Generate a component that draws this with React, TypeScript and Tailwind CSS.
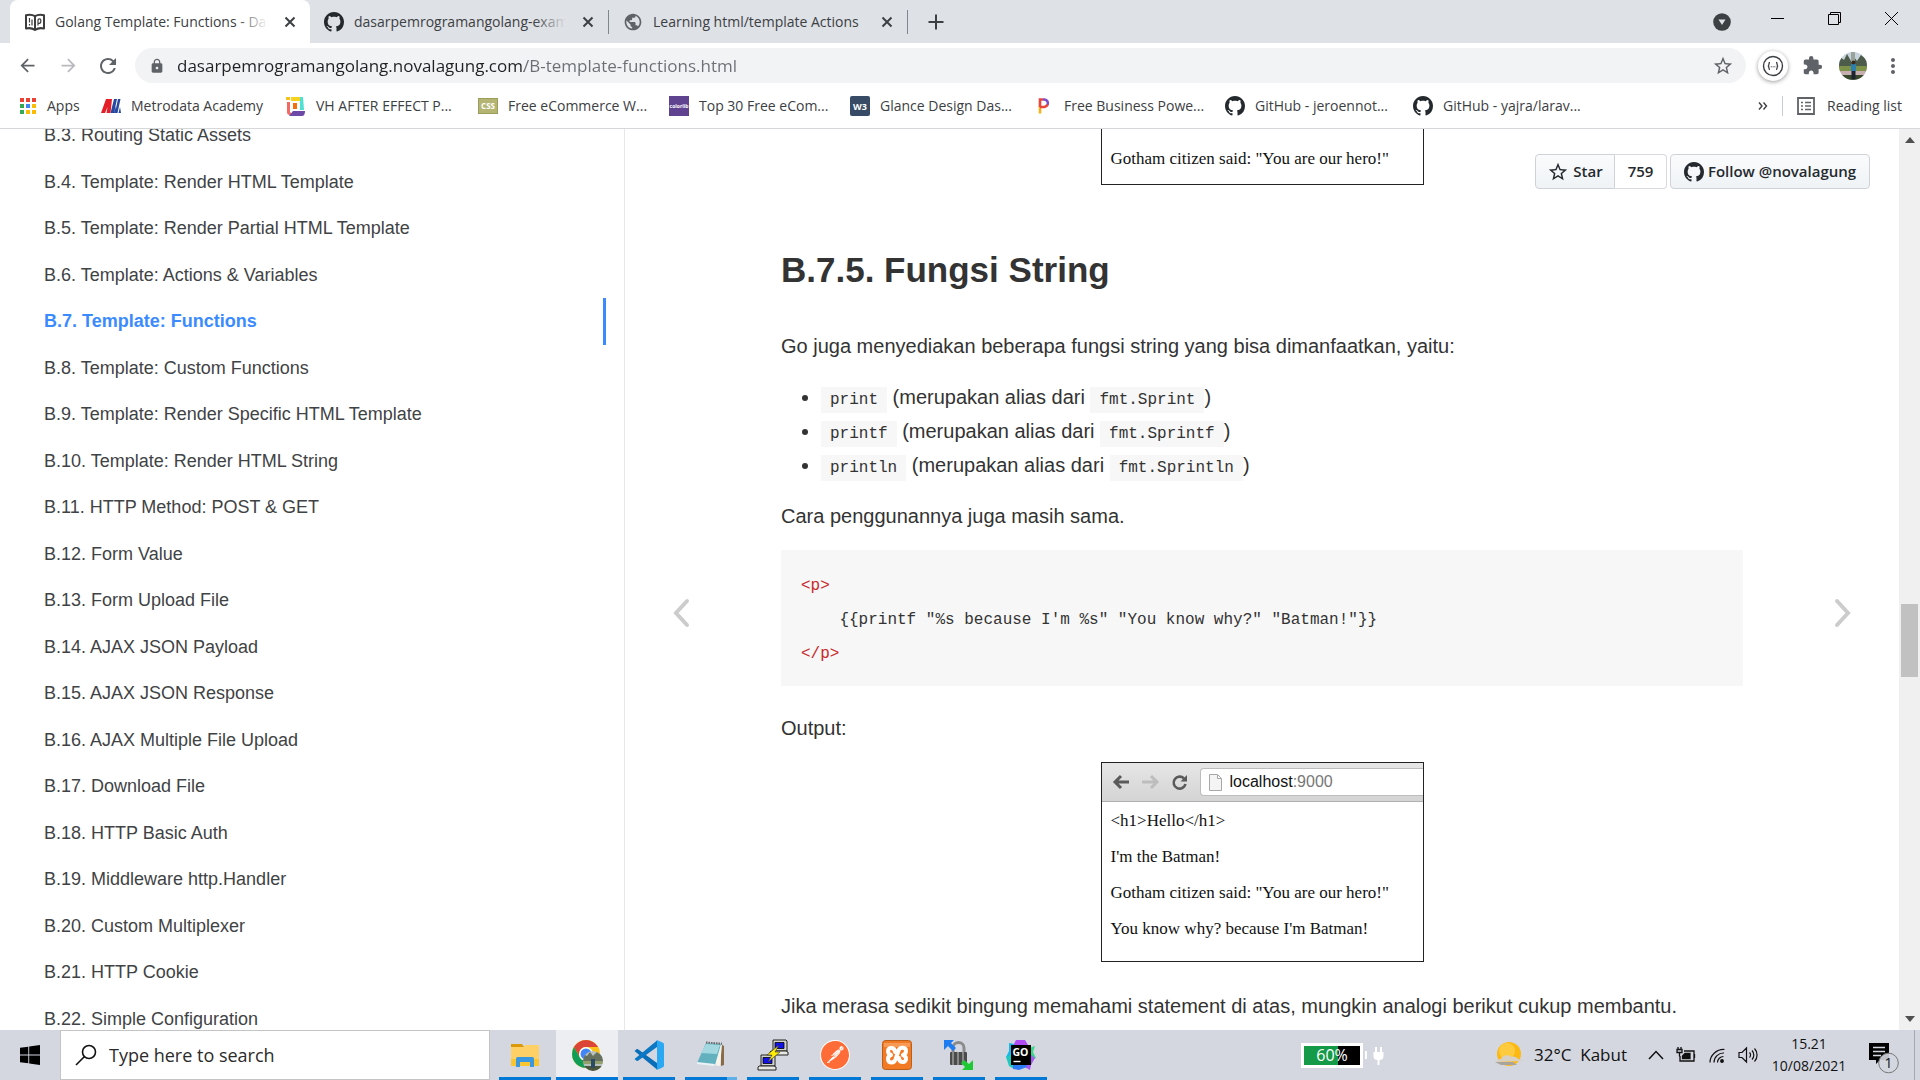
import React from "react";
import { SiPostman } from "react-icons/si";
import { MdExtension, MdLock, MdPublic, MdRefresh, MdStarBorder, MdArrowBack, MdArrowForward, MdMoreVert } from "react-icons/md";

const UI = "font-['Open_Sans',sans-serif]";

/* ---------- favicons and bookmark icons ---------- */

function GithubMark() {
  return (
    <svg viewBox="0 0 16 16" className="size-5 shrink-0" fill="#24292e">
      <path d="M8 0C3.58 0 0 3.58 0 8c0 3.54 2.29 6.53 5.47 7.59.4.07.55-.17.55-.38 0-.19-.01-.82-.01-1.49-2.01.37-2.53-.49-2.69-.94-.09-.23-.48-.94-.82-1.13-.28-.15-.68-.52-.01-.53.63-.01 1.08.58 1.23.82.72 1.21 1.87.87 2.33.66.07-.52.28-.87.51-1.07-1.78-.2-3.64-.89-3.64-3.95 0-.87.31-1.59.82-2.15-.08-.2-.36-1.02.08-2.12 0 0 .67-.21 2.2.82.64-.18 1.32-.27 2-.27s1.36.09 2 .27c1.53-1.04 2.2-.82 2.2-.82.44 1.1.16 1.92.08 2.12.51.56.82 1.27.82 2.15 0 3.07-1.87 3.75-3.65 3.95.29.25.54.73.54 1.48 0 1.07-.01 1.93-.01 2.2 0 .21.15.46.55.38A8.01 8.01 0 0 0 16 8c0-4.42-3.58-8-8-8z" />
    </svg>
  );
}

function BookIcon() {
  return (
    <svg viewBox="0 0 20 20" className="size-5 shrink-0" fill="none" stroke="#3c3c3c" strokeWidth="2">
      <path d="M1 3.2C4 2.4 7.5 2.6 10 4.2C12.500 2.600 16 2.400 19 3.200V16.500C16 15.800 12.500 16.200 10 18C7.500 16.200 4 15.800 1 16.500Z" strokeLinejoin="round" />
      <path d="M10 4.200V18" />
      <path d="M4.500 6v4.500M7 7.500v6M4.500 12v1.500M13 13.500V8c0-1.500 2.800-1.500 2.800 0v1.500c0 2-2.400 2-2.400 2" strokeWidth="1.200" />
    </svg>
  );
}

function AppsIcon() {
  const colors = ["#ea4335", "#ea4335", "#ea4335", "#34a853", "#4285f4", "#fbbc05", "#34a853", "#fbbc05", "#fbbc05"];
  return (
    <svg viewBox="0 0 18 18" className="size-[18px] shrink-0">
      {colors.map((c, i) => (
        <rect key={i} x={(i % 3) * 6 + 1} y={Math.floor(i / 3) * 6 + 1} width="4" height="4" fill={c} />
      ))}
    </svg>
  );
}

function MetrodataIcon() {
  return (
    <svg viewBox="0 0 20 20" className="size-5 shrink-0">
      <path d="M0 17L5 3H11L9.500 17H5.500L6.500 11L4 17Z" fill="#e31e26" />
      <path d="M9.500 17L13 3H16L13 17ZM14 17L17 3H19.500L16.500 17ZM17.500 17L19 11L20 17Z" fill="#27489f" />
      <path d="M13 17L14 10L16 17Z" fill="#27489f" />
    </svg>
  );
}

function VhIcon() {
  return (
    <svg viewBox="0 0 20 20" className="size-5 shrink-0">
      <path d="M0 1h4v3H0z" fill="#f4c21f" />
      <path d="M1 6h3v10l3 3H4c-2 0-3-1-3-3z" fill="#f26a63" />
      <path d="M5 1h10v4H5z" fill="#f6d21e" />
      <path d="M14 1h3l1 13h-4z" fill="#4fe0d2" />
      <path d="M3 20l4-5h12c0 3-1 5-3 5z" fill="#6d4aa8" />
      <path d="M7 7h4v6H7z" fill="#f36f10" />
    </svg>
  );
}

function TileIcon({ kind }: { kind: "css" | "colorlib" | "w3" }) {
  const text = { css: "CSS", colorlib: "colorlib", w3: "W3" }[kind];
  const look = {
    css: "h-4 border border-[#9a9d5c] bg-[#b4b573] text-[8px] text-white",
    colorlib: "h-5 bg-[#5f4390] text-[5px] text-white",
    w3: "h-5 rounded-xs bg-[#374b66] text-[9px] text-white",
  }[kind];
  return (
    <span aria-hidden="true" className={`flex w-5 shrink-0 items-center justify-center overflow-hidden leading-none font-bold ${look}`}>
      {text}
    </span>
  );
}

function PIcon() {
  return (
    <svg viewBox="0 0 20 20" className="size-5 shrink-0" fill="none" strokeWidth="2.600">
      <path d="M6 10V17.500" stroke="#f6b319" />
      <path d="M6 11V3.500H9" stroke="#e8453c" />
      <path d="M9 3.500H10.500A3.800 3.800 0 0 1 13.500 9" stroke="#7b4fc9" />
      <path d="M13.500 8.500A3.800 3.800 0 0 1 10.500 11H6" stroke="#e8453c" />
    </svg>
  );
}

/* ---------- browser chrome ---------- */

function CloseX() {
  return (
    <svg viewBox="0 0 12 12" className="size-3" stroke="#3c4043" strokeWidth="2" fill="none">
      <path d="M1.500 1.500l9 9M10.500 1.500l-9 9" />
    </svg>
  );
}

function Tab({ icon, title, active, fade }: { icon: React.ReactNode; title: string; active?: boolean; fade?: boolean }) {
  return (
    <div
      className={
        active
          ? "flex w-[300px] items-center gap-2.5 rounded-t-lg bg-white pr-3.5 pl-[15px]"
          : "flex w-[298px] items-center gap-2.5 pr-[14px] pl-3.5"
      }
    >
      {icon}
      <span className="relative min-w-0 flex-1 overflow-hidden text-sm whitespace-nowrap text-[#3c4043]">
        {title}
        {fade && (
          <span
            className={
              active
                ? "absolute inset-y-0 right-0 w-8 bg-linear-to-r from-transparent to-white"
                : "absolute inset-y-0 right-0 w-8 bg-linear-to-r from-transparent to-[#dee1e6]"
            }
          />
        )}
      </span>
      <button aria-label={`Close ${title}`} className="ml-1.5">
        <CloseX />
      </button>
    </div>
  );
}

function TabStrip() {
  return (
    <div className="flex h-[43px] bg-[#dee1e6] pl-2.5">
      <Tab active fade icon={<BookIcon />} title="Golang Template: Functions - Dasar" />
      <Tab fade icon={<GithubMark />} title="dasarpemrogramangolang-example" />
      <span className="my-auto h-6 w-px bg-[#80868b]" />
      <Tab icon={<MdPublic className="size-5 shrink-0 text-[#5f6368]" />} title="Learning html/template Actions" />
      <span className="my-auto h-6 w-px bg-[#80868b]" />
      <button aria-label="New tab" className="ml-5">
        <svg viewBox="0 0 16 16" className="size-4" stroke="#3c4043" strokeWidth="2" fill="none">
          <path d="M8 0.500v15M0.500 8h15" />
        </svg>
      </button>
      <div className="ml-auto flex">
        <button aria-label="Search tabs" className="flex w-[54px] items-center justify-center">
          <svg viewBox="0 0 18 18" className="size-[18px]">
            <circle cx="9" cy="9" r="8.800" fill="#3c4043" />
            <path d="M5.500 6.500h7L9 12z" fill="#dee1e6" />
          </svg>
        </button>
        <button aria-label="Minimize" className="flex h-[37px] w-[57px] items-center justify-center">
          <svg viewBox="0 0 13 13" className="size-[13px]" stroke="#000" fill="none">
            <path d="M0 6.500h13" />
          </svg>
        </button>
        <button aria-label="Restore" className="flex h-[37px] w-[57px] items-center justify-center">
          <svg viewBox="0 0 13 13" className="size-[13px]" stroke="#000" fill="none">
            <path d="M0.500 2.500h10v10h-10zM2.500 2.500v-2h10v10h-2" />
          </svg>
        </button>
        <button aria-label="Close window" className="flex h-[37px] w-[57px] items-center justify-center">
          <svg viewBox="0 0 13 13" className="size-[13px]" stroke="#000" fill="none">
            <path d="M0 0l13 13M13 0L0 13" />
          </svg>
        </button>
      </div>
    </div>
  );
}

function Avatar() {
  return (
    <svg viewBox="0 0 28 28" className="size-7">
      <clipPath id="avatar">
        <circle cx="14" cy="14" r="14" />
      </clipPath>
      <g clipPath="url(#avatar)">
        <rect width="28" height="28" fill="#c9d3dc" />
        <path d="M0 4l5 4 3-6 4 7 3-4 3 4 4-6 6 5v8H0z" fill="#4c5b4a" />
        <path d="M12 0h4v10h-4z" fill="#9aa39b" />
        <rect y="14" width="28" height="6" fill="#7d9148" />
        <rect y="19" width="28" height="4" fill="#c7aeb0" />
        <rect y="23" width="28" height="5" fill="#39472b" />
        <path d="M12 12h5v7h-5z" fill="#2d7fae" />
        <path d="M12.500 19h4v8h-4z" fill="#1b2230" />
        <circle cx="14.500" cy="10.500" r="2" fill="#3a2a22" />
      </g>
    </svg>
  );
}

function Toolbar() {
  return (
    <div className="flex h-[45px] items-center bg-white pr-[15px] pl-[17px]">
      <button aria-label="Back">
        <MdArrowBack className="size-[21px] text-[#5f6368]" />
      </button>
      <button aria-label="Forward" className="ml-5">
        <MdArrowForward className="size-[21px] text-[#b8babd]" />
      </button>
      <button aria-label="Reload" className="ml-[17px]">
        <MdRefresh className="size-6 text-[#5f6368]" />
      </button>
      <div className="ml-[15px] flex h-[35px] flex-1 items-center rounded-full bg-[#f1f3f4] pr-3 pl-3.5">
        <MdLock className="size-4 shrink-0 text-[#5f6368]" />
        <input
          aria-label="Address"
          defaultValue="dasarpemrogramangolang.novalagung.com/B-template-functions.html"
          className="ml-3 min-w-0 flex-1 bg-[linear-gradient(to_right,#202124_347px,#6b6f74_347px)] bg-clip-text text-[17px] text-transparent caret-black outline-none"
        />
        <button aria-label="Bookmark this page">
          <MdStarBorder className="size-[22px] text-[#5f6368]" />
        </button>
      </div>
      <button aria-label="JSON extension" className="ml-3 flex size-[30px] items-center justify-center rounded-full bg-white shadow-[0_1px_4px_rgba(0,0,0,0.4)]">
        <svg viewBox="0 0 22 22" className="size-[22px]" fill="none" stroke="#3c4043">
          <circle cx="11" cy="11" r="9.500" strokeWidth="1.400" />
          <path d="M8 7.500c-1.500 0-1 1.500-1.200 2.500c-.1.600-.5 1-1 1c.5 0 .9.400 1 1c.2 1-.3 2.500 1.200 2.500M14 7.500c1.500 0 1 1.500 1.200 2.500c.1.600.5 1 1 1c-.5 0-.9.400-1 1c-.2 1 .3 2.500-1.200 2.500" strokeWidth="1.300" />
          <path d="M8.800 11.800h1M10.600 11.800h1M12.400 11.800h1" />
        </svg>
      </button>
      <button aria-label="Extensions" className="ml-3.5">
        <MdExtension className="size-[21px] text-[#5f6368]" />
      </button>
      <button aria-label="Profile" className="ml-4">
        <Avatar />
      </button>
      <button aria-label="Menu" className="ml-3.5">
        <MdMoreVert className="size-6 text-[#5f6368]" />
      </button>
    </div>
  );
}

function Bookmark({ icon, label, width }: { icon: React.ReactNode; label: string; width: string }) {
  return (
    <a href="#" className="flex items-center gap-2.5">
      {icon}
      <span className={`whitespace-nowrap ${width}`}>{label}</span>
    </a>
  );
}

function BookmarksBar() {
  return (
    <nav aria-label="Bookmarks" className="flex h-[41px] items-center gap-5 border-b border-[#d5d7db] bg-white pb-1 pr-[18px] pl-[19px] text-sm text-[#3c4043]">
      <Bookmark icon={<AppsIcon />} label="Apps" width="w-[34px]" />
      <Bookmark icon={<MetrodataIcon />} label="Metrodata Academy" width="w-[135px]" />
      <Bookmark icon={<VhIcon />} label="VH AFTER EFFECT P..." width="w-[142px]" />
      <Bookmark icon={<TileIcon kind="css" />} label="Free eCommerce W..." width="w-[141px]" />
      <Bookmark icon={<TileIcon kind="colorlib" />} label="Top 30 Free eCom..." width="w-[131px]" />
      <Bookmark icon={<TileIcon kind="w3" />} label="Glance Design Das..." width="w-[134px]" />
      <Bookmark icon={<PIcon />} label="Free Business Powe..." width="w-[141px]" />
      <Bookmark icon={<GithubMark />} label="GitHub - jeroennot..." width="w-[138px]" />
      <Bookmark icon={<GithubMark />} label="GitHub - yajra/larav..." width="w-[141px]" />
      <div className="ml-auto flex items-center">
        <button aria-label="More bookmarks" className="mr-3.5">
          <svg viewBox="0 0 10 8" className="h-2 w-2.5" fill="none" stroke="#3c4043" strokeWidth="1.400">
            <path d="M1 0.500l3 3.500l-3 3.500M5.500 0.500l3 3.500l-3 3.500" />
          </svg>
        </button>
        <span className="mr-3.5 h-5 w-px bg-[#c9ccd1]" />
        <button className="flex items-center gap-3 whitespace-nowrap">
          <svg viewBox="0 0 18 18" className="size-[18px]" fill="none" stroke="#5f6368" strokeWidth="1.800">
            <path d="M1 1h16v16H1z" />
            <path d="M4 5.500h2M8 5.500h6M4 9h2M8 9h6M4 12.500h2M8 12.500h6" strokeWidth="1.500" />
          </svg>
          Reading list
        </button>
      </div>
    </nav>
  );
}

/* ---------- page ---------- */

const chapters = [
  "B.3. Routing Static Assets",
  "B.4. Template: Render HTML Template",
  "B.5. Template: Render Partial HTML Template",
  "B.6. Template: Actions & Variables",
  "B.7. Template: Functions",
  "B.8. Template: Custom Functions",
  "B.9. Template: Render Specific HTML Template",
  "B.10. Template: Render HTML String",
  "B.11. HTTP Method: POST & GET",
  "B.12. Form Value",
  "B.13. Form Upload File",
  "B.14. AJAX JSON Payload",
  "B.15. AJAX JSON Response",
  "B.16. AJAX Multiple File Upload",
  "B.17. Download File",
  "B.18. HTTP Basic Auth",
  "B.19. Middleware http.Handler",
  "B.20. Custom Multiplexer",
  "B.21. HTTP Cookie",
  "B.22. Simple Configuration",
];

function Sidebar() {
  return (
    <nav aria-label="Chapters" className="w-[625px] shrink-0 overflow-hidden border-r border-[#e7e7e7] bg-white pr-[18px]">
      <ul className="-mt-[17px] grid h-[930px] auto-rows-fr text-lg">
        {chapters.map((c) => (
          <li key={c} className="flex">
            <a
              href="#"
              className={
                c.startsWith("B.7.")
                  ? "flex flex-1 items-center border-r-3 border-[#3b8bff] pl-11 font-bold text-[#3b8bff]"
                  : "flex flex-1 items-center pl-11 text-[#3f4345]"
              }
            >
              {c}
            </a>
          </li>
        ))}
      </ul>
    </nav>
  );
}

function Code({ children }: { children: React.ReactNode }) {
  return <code className="bg-[#f7f7f7] px-[9px] py-1 font-['Liberation_Mono',monospace] text-base">{children}</code>;
}

function ImageToolbar() {
  return (
    <div className="flex h-[39px] items-center border-b border-[#b0b0b0] bg-linear-to-b from-[#e6e6e6] to-[#d4d4d4] pl-2.5">
      <svg viewBox="0 0 80 18" className="h-[18px] w-20" fill="none" strokeWidth="3">
        <path d="M17 9H3M9 3L3 9l6 6" stroke="#5a5a5a" />
        <path d="M30 9h14M39 3l6 6l-6 6" stroke="#bdbdbd" />
        <path d="M72 5.500A6 6 0 1 0 73.500 11" stroke="#5a5a5a" strokeWidth="2.600" />
        <path d="M75 2v6.500h-6.500z" fill="#5a5a5a" />
      </svg>
      <div className="ml-2 flex h-7 flex-1 items-center gap-2 rounded-l border border-r-0 border-[#bcbcbc] bg-white pl-2">
        <svg viewBox="0 0 13 17" className="h-[17px] w-[13px]" fill="#f4f4f4" stroke="#a8a8a8">
          <path d="M0.500 0.500h8l4 4v12h-12zM8.500 0.500v4h4" />
        </svg>
        <span className="text-base text-[#777]">
          <span className="text-[#111]">localhost</span>:9000
        </span>
      </div>
    </div>
  );
}

function Article() {
  return (
    <article className="w-full max-w-[962px] text-xl leading-[34px] text-[#333]">
      <figure className="mx-auto flex h-14 w-[323px] items-center border-x border-b border-[#222] pt-1 pl-[9px]">
        <p className="font-['Liberation_Serif',serif] text-[17px] text-[#111]">Gotham citizen said: "You are our hero!"</p>
      </figure>
      <h2 className="mt-[61px] text-[35px] leading-[48px] font-bold">B.7.5. Fungsi String</h2>
      <p className="mt-[35px]">Go juga menyediakan beberapa fungsi string yang bisa dimanfaatkan, yaitu:</p>
      <ul className="mt-[17px] list-disc pl-10">
        <li>
          <Code>print</Code> (merupakan alias dari <Code>fmt.Sprint</Code>)
        </li>
        <li>
          <Code>printf</Code> (merupakan alias dari <Code>fmt.Sprintf</Code>)
        </li>
        <li>
          <Code>println</Code> (merupakan alias dari <Code>fmt.Sprintln</Code>)
        </li>
      </ul>
      <p className="mt-[17px]">Cara penggunannya juga masih sama.</p>
      <pre className="mt-[17px] bg-[#f7f7f7] px-5 pt-[19px] pb-[15px] font-['Liberation_Mono',monospace] text-base leading-[34px]">
        <span className="text-[#c82829]">{"<p>"}</span>
        {"\n    {{printf \"%s because I'm %s\" \"You know why?\" \"Batman!\"}}\n"}
        <span className="text-[#c82829]">{"</p>"}</span>
      </pre>
      <p className="mt-[25px]">Output:</p>
      <figure className="mx-auto mt-[17px] h-[200px] w-[323px] border border-[#222]">
        <ImageToolbar />
        <div className="flex flex-col gap-0.5 pt-0.5 pl-[9px] font-['Liberation_Serif',serif] text-[17px] text-[#111]">
          <p>{"<h1>Hello</h1>"}</p>
          <p>I'm the Batman!</p>
          <p>Gotham citizen said: "You are our hero!"</p>
          <p>You know why? because I'm Batman!</p>
        </div>
      </figure>
      <p className="mt-[27px]">Jika merasa sedikit bingung memahami statement di atas, mungkin analogi berikut cukup membantu.</p>
    </article>
  );
}

function GithubButtons() {
  const btn = "flex items-center gap-1 border border-[#cfd3d8] bg-linear-to-b from-[#fafbfc] to-[#eff3f6]";
  return (
    <div className={`absolute top-[25px] right-[29px] flex h-[35px] text-[15px] font-semibold text-[#24292e] ${UI}`}>
      <a href="#" className={`${btn} w-[80px] justify-center rounded-l`}>
        <MdStarBorder className="size-[22px]" />
        Star
      </a>
      <a href="#" className="mr-[3px] flex w-[52px] items-center justify-center rounded-r border border-l-0 border-[#d7dade] bg-white">
        759
      </a>
      <a href="#" className={`${btn} w-[200px] justify-center rounded whitespace-nowrap`}>
        <GithubMark />
        Follow @novalagung
      </a>
    </div>
  );
}

function Chevron({ d }: { d: string }) {
  return (
    <svg viewBox="0 0 18 30" className="h-[30px] w-[18px]" fill="none" stroke="#ccc" strokeWidth="4" strokeLinecap="round">
      <path d={d} />
    </svg>
  );
}

function Scrollbar() {
  return (
    <div aria-hidden="true" className="flex w-[21px] shrink-0 flex-col items-center bg-[#f0f0f0] py-2">
      <svg viewBox="0 0 10 6" className="h-1.5 w-2.5" fill="#505050">
        <path d="M0 6L5 0l5 6z" />
      </svg>
      <span className="mt-[461px] h-[73px] w-[17px] bg-[#c1c1c1]" />
      <svg viewBox="0 0 10 6" className="mt-auto h-1.5 w-2.5" fill="#505050">
        <path d="M0 0L5 6l5-6z" />
      </svg>
    </div>
  );
}

/* ---------- taskbar ---------- */

function FolderIcon() {
  return (
    <svg viewBox="0 0 28 28" className="size-7">
      <path d="M0 3h11l2 3H0z" fill="#dd9a08" />
      <path d="M0 6h13l1-2h14v21H0z" fill="#fed066" />
      <path d="M0 18h28v7H0z" fill="#fbc52f" />
      <path d="M5 26v-8c0-1.500 1-2 2-2h14c1 0 2 .500 2 2v8h-4v-5h-10v5z" fill="#3b97e0" />
    </svg>
  );
}

function ChromeIcon() {
  return (
    <svg viewBox="0 0 32 32" className="size-8">
      <circle cx="15" cy="15" r="14" fill="#fbc116" />
      <path d="M2.900 8A14 14 0 0 1 27.100 8H15a7 7 0 0 0-6 10.500z" fill="#db4437" />
      <path d="M2.900 8A14 14 0 0 0 15 29l6-10.500a7 7 0 0 1-12 0z" fill="#0f9d58" />
      <circle cx="15" cy="15" r="7" fill="#fff" />
      <circle cx="15" cy="15" r="5.500" fill="#4285f4" />
      <clipPath id="profile-badge">
        <circle cx="22" cy="22" r="10" />
      </clipPath>
      <g clipPath="url(#profile-badge)">
        <rect x="12" y="12" width="20" height="20" fill="#b8c0bd" />
        <path d="M12 15l4 2 3-4 3 4 4-4 6 4v6H12z" fill="#65705f" />
        <path d="M12 22h20v3H12z" fill="#93a06b" />
        <path d="M12 27h20v5H12z" fill="#4c5538" />
        <path d="M20 20h4v9h-4z" fill="#2b4a63" />
      </g>
    </svg>
  );
}

function VscodeIcon() {
  return (
    <svg viewBox="0 0 32 32" className="size-8">
      <path d="M1.500 12L3.500 10.200c.500-.400 1-.400 1.500 0L24 24v6.500z" fill="#0a6fb8" />
      <path d="M1.500 20L3.500 21.800c.500.400 1 .400 1.500 0L24 8V1.500z" fill="#0c78c4" />
      <path d="M23 1.600c.600-.500 1.300-.500 2-.200l5 2.400c.700.300 1 .900 1 1.600v21.200c0 .700-.300 1.300-1 1.600l-5 2.400c-.700.300-1.400.300-2-.200c.6.400 1-.200 1-1.200V2.800c0-1-.400-1.600-1-1.200z" fill="#2ba8f2" />
    </svg>
  );
}

function NotepadIcon() {
  return (
    <svg viewBox="0 0 32 32" className="size-8">
      <path d="M26 5l3 2v19l-3 1z" fill="#8a6b48" />
      <path d="M25 5l2 1-2 21-6-1z" fill="#f5f3ec" />
      <path d="M11 4l15 1-6 21L2 24z" fill="#63b0bf" />
      <path d="M11 5l14 1-3 9-16-1z" fill="#a3d8e0" />
      <path d="M2 23l18 2-1 2L2 25z" fill="#e9f2f4" />
      <path d="M11 3.500l16 1.200" stroke="#6b6b6b" strokeWidth="2" strokeDasharray="1.500 1" />
    </svg>
  );
}

function Computer({ x, y }: { x: number; y: number }) {
  return (
    <g transform={`translate(${x} ${y})`}>
      <path d="M3 0h13l1 1v10H3z" fill="#d4d4cf" stroke="#222" />
      <path d="M5 2.500h9v6H5z" fill="#1212e8" stroke="#000" strokeWidth=".800" />
      <path d="M1 11h15l2 1v3H0v-3z" fill="#e8e8e2" stroke="#222" />
    </g>
  );
}

function PuttyIcon() {
  return (
    <svg viewBox="0 0 32 32" className="size-8">
      <Computer x={13} y={1} />
      <Computer x={1} y={16} />
      <path d="M22 6L10 16h5l-4 7L23 13h-5z" fill="#ffee00" stroke="#333" strokeWidth=".600" />
    </svg>
  );
}

function PostmanIcon() {
  return (
    <span className="flex size-[30px] items-center justify-center rounded-full bg-white">
      <SiPostman className="size-7 text-[#ff6c37]" />
    </span>
  );
}

function XamppIcon() {
  return (
    <svg viewBox="0 0 30 30" className="size-[30px]" fill="none" strokeLinecap="round" strokeLinejoin="round">
      <rect x=".500" y=".500" width="29" height="29" rx="3" fill="#f37a24" stroke="#b9601c" />
      <path d="M2 3h26v4H2z" fill="#f79a55" />
      <g stroke="#fff" strokeWidth="4">
        <path d="M13 12C13 7 6 6.500 6 11c0 2 1.500 3.500 3 4c-1.500.500-3 2-3 4c0 4.500 6 4.500 7.500.500C14.500 16.500 15.500 13.500 16.500 10.500C18 6.500 24 7 24 11c0 2-1.500 3.500-3 4c1.500.500 3 2 3 4c0 4.500-7 4-7-1" />
      </g>
    </svg>
  );
}

function LockTransferIcon() {
  return (
    <svg viewBox="0 0 32 32" className="size-8">
      <path d="M10 14V9a5.500 5.500 0 0 1 11 0v5" fill="none" stroke="#8b8b8b" strokeWidth="3" />
      <rect x="7" y="13" width="17" height="13" rx="1" fill="#4b4b4b" />
      <path d="M10 13v13M15 13v13M20 13v13" stroke="#888" strokeWidth="2" />
      <path d="M1 1h10L8 4l5 5-3 3-5-5-4 4z" fill="#1f7cf0" />
      <path d="M30 31H19l3-3-4-4 3-3 5 4 4-4z" fill="#1fc936" />
    </svg>
  );
}

function GolandIcon() {
  return (
    <svg viewBox="0 0 32 32" className="size-8">
      <path d="M4 4l6 1v22l-5-3-4-6 3-6z" fill="#18b9ea" />
      <path d="M1 18l6-3 2 15-5-3z" fill="#20c9c0" />
      <path d="M9 5l2-4h9l3 5v4H8z" fill="#b04cf5" />
      <path d="M24 9l6-2-2 6 3 6-5 2z" fill="#36d98a" />
      <path d="M25 15l5 4-4 7-1 5-7-4-1-5z" fill="#a857f5" />
      <path d="M8 24h13l1 4-8 3-6-1z" fill="#2f7bf5" />
      <rect x="6" y="6" width="20" height="20" fill="#000" />
      <text x="7.500" y="16.500" fill="#fff" fontSize="10.500" fontWeight="700" fontFamily="Open Sans">GO</text>
      <path d="M8.500 22.500h7" stroke="#fff" strokeWidth="1.400" />
    </svg>
  );
}

const apps: { name: string; icon: React.ReactNode; active?: boolean; stacked?: boolean }[] = [
  { name: "File Explorer", icon: <FolderIcon /> },
  { name: "Google Chrome", icon: <ChromeIcon />, active: true },
  { name: "Visual Studio Code", icon: <VscodeIcon /> },
  { name: "Notepad", icon: <NotepadIcon />, stacked: true },
  { name: "PuTTY", icon: <PuttyIcon /> },
  { name: "Postman", icon: <PostmanIcon /> },
  { name: "XAMPP", icon: <XamppIcon /> },
  { name: "WinSCP", icon: <LockTransferIcon /> },
  { name: "GoLand", icon: <GolandIcon /> },
];

function Taskbar() {
  return (
    <footer className={`flex h-[50px] shrink-0 bg-[#d4d7e0] text-[#111] ${UI}`}>
      <button aria-label="Start" className="flex w-[60px] items-center justify-center">
        <svg viewBox="0 0 20 20" className="size-5" fill="#000">
          <path d="M0 2.800L8.300 1.700V9.500H0zM9.200 1.500L20 0V9.500H9.200zM0 10.400H8.300V18.300L0 17.200zM9.200 10.400H20V20L9.200 18.500z" />
        </svg>
      </button>
      <label className="flex w-[430px] items-center border border-[#c4c4c6] bg-white pl-3.5">
        <svg viewBox="0 0 22 22" className="size-[22px]" fill="none" stroke="#111" strokeWidth="1.600">
          <circle cx="14" cy="8" r="6.500" />
          <path d="M9.500 12.500L1 21" />
        </svg>
        <input aria-label="Search" placeholder="Type here to search" className="ml-3 min-w-0 flex-1 text-lg outline-none placeholder:text-[#2b2b2b]" />
      </label>
      <div className="ml-1 grid w-[558px] grid-cols-9">
        {apps.map((a) => (
          <button
            key={a.name}
            aria-label={a.name}
            className={a.active ? "flex flex-col items-center bg-[#eceef2]" : "flex flex-col items-center px-[5px]"}
          >
            <span className="flex flex-1 items-center pt-0.5">{a.icon}</span>
            <span className="flex h-[3px] w-full bg-[#0078d7]">
              {a.stacked && <span className="ml-auto w-2.5 bg-[#5fb0ea]" />}
            </span>
          </button>
        ))}
      </div>
      <div className="ml-auto flex items-center">
        <div className="flex h-[25px] w-[62px] items-center justify-center border-3 border-white bg-[linear-gradient(to_right,#159a48_60%,#000_60%)] text-base leading-none text-white">
          60%
        </div>
        <svg viewBox="0 0 20 20" className="ml-0.5 size-5" fill="#fff">
          <path d="M0 6h2v8H0zM10 2h2v5h-2zM15 2h2v5h-2zM8.500 7h10v4c0 3-2 4-4 4v5h-2v-5c-2 0-4-1-4-4z" />
        </svg>
        <button className="ml-[110px] flex items-center gap-2.5 text-[17px] whitespace-nowrap">
          <svg viewBox="0 0 28 28" className="size-7">
            <circle cx="14" cy="13" r="12" fill="#fdb813" />
            <circle cx="12" cy="10" r="8" fill="#fecb3e" />
            <path d="M1 21c0-2 3-3 5-3c1-4 8-5 10-2c3-1 6 0 7 2c3 0 4 1 5 2z" fill="#d9d0c4" />
            <path d="M0 21h18l4 3H6z" fill="#aaa49f" />
          </svg>
          <span className="w-[95px]">32°C&nbsp; Kabut</span>
        </button>
        <div className="ml-5 flex items-center gap-3">
          <button aria-label="Show hidden icons">
            <svg viewBox="0 0 16 10" className="h-2.5 w-4" fill="none" stroke="#111" strokeWidth="1.500">
              <path d="M1 9l7-7.500L15 9" />
            </svg>
          </button>
          <svg viewBox="0 0 20 16" className="h-4 w-5" fill="none" stroke="#111" strokeWidth="1.300">
            <path d="M8 4h10v10H4V9M18.500 7v4" />
            <path d="M9 6.500h5v5H6.500V9z" fill="#111" />
            <path d="M2 0v2.500M5 0v2.500M1 2.500h5v3h-5zM3.500 5.500v4" />
          </svg>
          <svg viewBox="0 0 18 18" className="size-[18px]" fill="none" stroke="#111" strokeWidth="1.200">
            <circle cx="14" cy="15" r="1.300" fill="#111" />
            <path d="M9.500 16.500A6 6 0 0 1 15.500 10.500M6 16.500A9.500 9.500 0 0 1 16 7M2 16.500C2 9 9 3 16.500 3.500" />
          </svg>
          <svg viewBox="0 0 21 18" className="h-[18px] w-[21px]" fill="none" stroke="#111" strokeWidth="1.200">
            <path d="M1 6.500h3L8.500 2v14L4 11.500H1zM11.500 6.500a3.500 3.500 0 0 1 0 5M14 4.500a6.500 6.500 0 0 1 0 9M16.500 2.500a9.500 9.500 0 0 1 0 13" />
          </svg>
        </div>
        <button className="ml-2 flex w-[84px] flex-col items-center text-sm leading-[22px]">
          <span>15.21</span>
          <span>10/08/2021</span>
        </button>
        <button aria-label="1 notification" className="ml-[18px] flex h-10 w-[45px] items-end">
          <svg viewBox="0 0 32 32" className="size-8">
            <path d="M0 0h20v17h-9l-4 4v-4H0z" fill="#000" />
            <path d="M4 4.500h12M4 8.500h12M4 12.500h8" stroke="#d4d7e0" strokeWidth="1.500" />
            <circle cx="19.500" cy="20" r="9.800" fill="#d4d7e0" fillOpacity=".900" stroke="#777" />
            <text x="19.500" y="25" textAnchor="middle" fontSize="14" fill="#111" fontFamily="Open Sans">1</text>
          </svg>
        </button>
        <span className="mr-[5px] h-full w-px bg-[#a5a8b0]" />
      </div>
    </footer>
  );
}

export default function App() {
  return (
    <div className="flex h-screen flex-col overflow-hidden bg-white">
      <header className={UI}>
        <TabStrip />
        <Toolbar />
        <BookmarksBar />
      </header>
      <div className="relative flex min-h-0 flex-1 overflow-hidden font-['Liberation_Sans',sans-serif]">
        <Sidebar />
        <main className="relative flex min-w-0 flex-1 justify-between overflow-hidden">
          <button aria-label="Previous chapter" className="flex items-center pt-[66px] pl-[47px]">
            <Chevron d="M15 3L4 15l11 12" />
          </button>
          <Article />
          <button aria-label="Next chapter" className="flex items-center pt-[66px] pr-[47px]">
            <Chevron d="M3 3l11 12L3 27" />
          </button>
          <GithubButtons />
        </main>
        <Scrollbar />
      </div>
      <Taskbar />
    </div>
  );
}
